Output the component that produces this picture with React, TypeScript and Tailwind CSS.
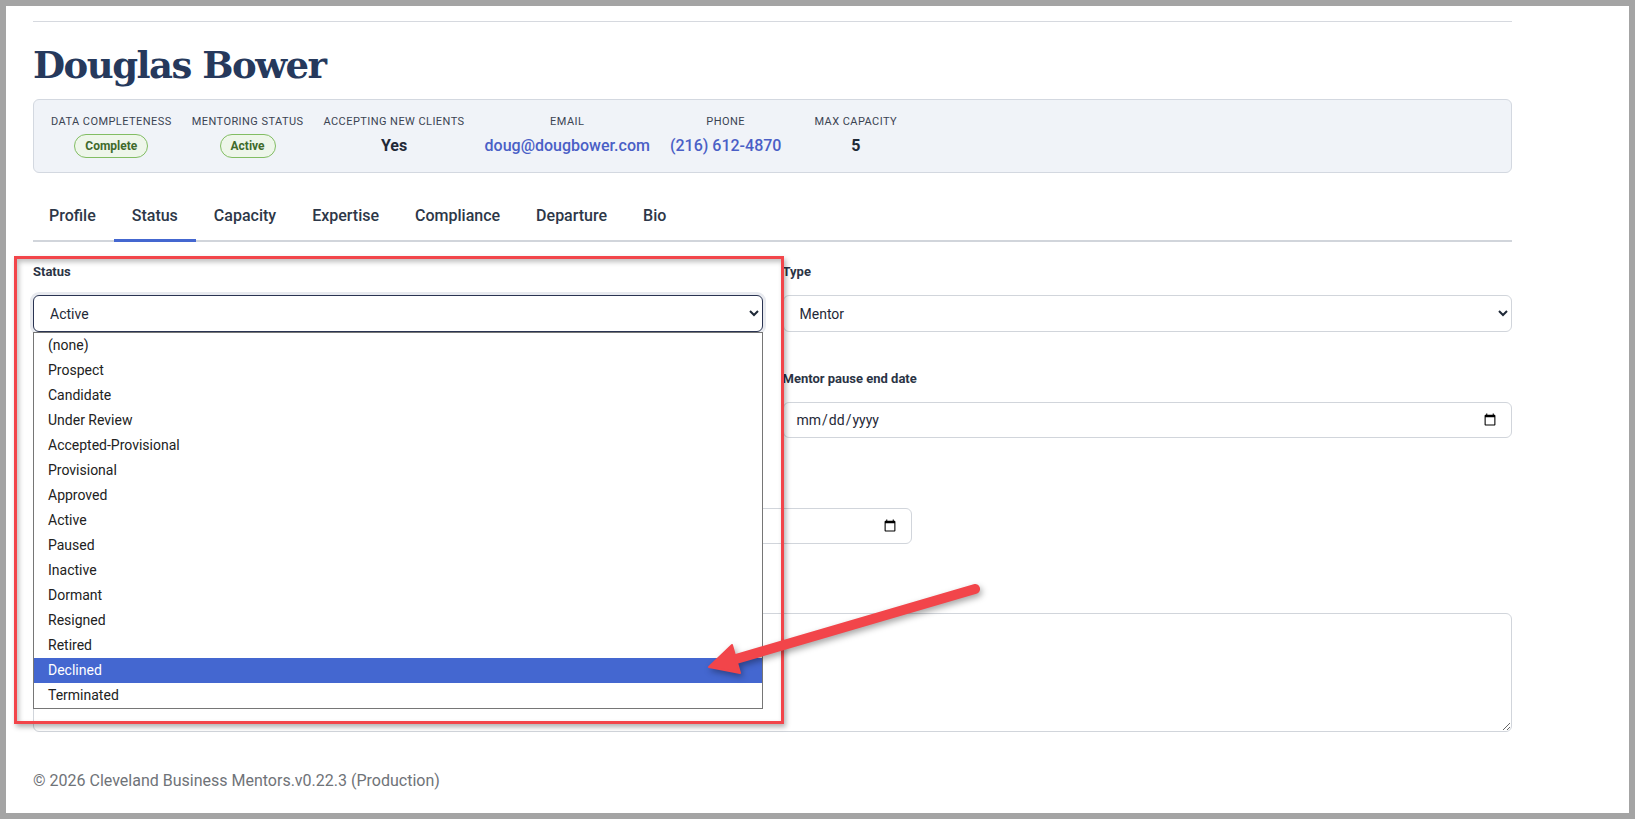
import React from "react";

const statusOptions = [
  "(none)",
  "Prospect",
  "Candidate",
  "Under Review",
  "Accepted-Provisional",
  "Provisional",
  "Approved",
  "Active",
  "Paused",
  "Inactive",
  "Dormant",
  "Resigned",
  "Retired",
  "Declined",
  "Terminated",
];

const tabs = ["Profile", "Status", "Capacity", "Expertise", "Compliance", "Departure", "Bio"];

function Badge({ children }: { children: React.ReactNode }) {
  return (
    <span className="inline-flex h-6 items-center rounded-full border border-[#82bd63] bg-[#eef6ea] px-[10px] text-[12px] font-bold text-[#3f6a2c]">
      {children}
    </span>
  );
}

function Stat({
  label,
  children,
  className = "",
}: {
  label: string;
  children: React.ReactNode;
  className?: string;
}) {
  return (
    <div className={"flex flex-col items-center " + className}>
      <div className="text-[11px] leading-[14px] tracking-[0.04em] text-[#3b4352]">{label}</div>
      <div className="mt-[5px] flex h-6 items-center">{children}</div>
    </div>
  );
}

function Label({ children }: { children: React.ReactNode }) {
  return <div className="mb-[15px] text-[13px] font-bold leading-4 text-[#2b3445]">{children}</div>;
}

export default function App() {
  return (
    <div className="min-h-screen bg-[#a4a4a4] p-[6px]" style={{ fontFamily: "Roboto, 'Liberation Sans', sans-serif" }}>
      <div className="relative h-[807px] bg-white pl-[27px] pt-[15px]">
        <div className="w-[1479px]">
          <div className="border-t border-[#d6d9df]" />

          <h1
            className="mt-[19px] text-[37px] font-bold leading-[48px] tracking-[-1.5px] text-[#26395c]"
            style={{ fontFamily: "'DejaVu Serif', 'Liberation Serif', serif" }}
          >
            Douglas Bower
          </h1>

          {/* summary strip */}
          <div className="mt-[10px] flex gap-5 rounded-md border border-[#d3d8e0] bg-[#f0f3f8] pb-[14px] pl-[17px] pt-[15px]">
            <Stat label="DATA COMPLETENESS">
              <Badge>Complete</Badge>
            </Stat>
            <Stat label="MENTORING STATUS">
              <Badge>Active</Badge>
            </Stat>
            <Stat label="ACCEPTING NEW CLIENTS">
              <span className="text-[16px] font-bold text-[#1f2937]">Yes</span>
            </Stat>
            <Stat label="EMAIL">
              <span className="text-[16px] font-medium text-[#4a5fc6]">doug@dougbower.com</span>
            </Stat>
            <Stat label="PHONE">
              <span className="text-[16px] font-medium text-[#4a5fc6]">(216) 612-4870</span>
            </Stat>
            <Stat label="MAX CAPACITY" className="ml-[13px]">
              <span className="text-[16px] font-bold text-[#1f2937]">5</span>
            </Stat>
          </div>

          {/* tabs */}
          <nav className="mt-[22px] flex border-b-2 border-[#d1d5db]">
            {tabs.map((t, i) => (
              <div
                key={t}
                className={
                  "-mb-[2px] border-b-[3px] px-[18px] pb-[11px] pt-[9px] text-[16px] font-medium leading-6 text-[#2d3748] " +
                  (i === 0 ? "-ml-[2px] " : "") +
                  (t === "Status" ? "border-[#4467d0]" : "border-transparent")
                }
              >
                {t}
              </div>
            ))}
          </nav>

          {/* form */}
          <div className="pt-[22px]">
            <div className="grid grid-cols-2 gap-5">
              <div>
                <Label>Status</Label>
                <div className="relative">
                  <select
                    defaultValue="Active"
                    className="h-[37px] w-full rounded-md border border-[#2a3452] bg-white pl-3 pr-2 text-[14px] text-[#1f2937] shadow-[0_0_0_3px_#e8eaef]"
                  >
                    {statusOptions.map((o) => (
                      <option key={o}>{o}</option>
                    ))}
                  </select>
                  {/* open listbox */}
                  <div className="absolute left-0 right-0 top-full z-10 border border-[#767676] bg-white">
                    {statusOptions.map((o) => (
                      <div
                        key={o}
                        className={
                          "flex h-[25px] items-center pl-[14px] text-[14px] " +
                          (o === "Declined" ? "bg-[#4467d0] text-white" : "text-[#222]")
                        }
                      >
                        {o}
                      </div>
                    ))}
                  </div>
                </div>
              </div>
              <div>
                <Label>Type</Label>
                <select
                  defaultValue="Mentor"
                  className="h-[37px] w-full rounded-md border border-[#d1d5db] bg-white pl-3 pr-2 text-[14px] text-[#1f2937]"
                >
                  <option>Mentor</option>
                  <option>Co-Mentor</option>
                </select>
              </div>
            </div>

            <div className="mt-[39px] grid grid-cols-2 gap-5">
              <div>
                <Label>Mentor pause start date</Label>
                <input type="date" className="h-9 w-full rounded-md border border-[#d1d5db] px-3 text-[14px] text-[#1f2937]" />
              </div>
              <div>
                <Label>Mentor pause end date</Label>
                <input type="date" className="h-9 w-full rounded-md border border-[#d1d5db] px-3 text-[14px] text-[#1f2937]" />
              </div>
            </div>

            <div className="mt-[39px]">
              <Label>Status date</Label>
              <input type="date" className="h-9 w-[879px] rounded-md border border-[#d1d5db] px-3 text-[14px] text-[#1f2937]" />
            </div>

            <div className="mt-[38px]">
              <Label>Status notes</Label>
              <textarea className="block h-[119px] w-full rounded-md border border-[#d1d5db] px-3 py-2 text-[14px]" />
            </div>
          </div>

          <footer className="mt-[37px] text-[16px] leading-6 text-[#6f7378]">
            © 2026 Cleveland Business Mentors.v0.22.3 (Production)
          </footer>
        </div>

        {/* annotation: red highlight box */}
        <div className="pointer-events-none absolute left-[8px] top-[250px] z-20 h-[468px] w-[770px] border-[3px] border-[#f2454a] shadow-[2px_3px_5px_rgba(0,0,0,0.3),inset_2px_3px_5px_rgba(0,0,0,0.25)]" />

        {/* annotation: arrow */}
        <svg
          className="pointer-events-none absolute left-0 top-0 z-20 drop-shadow-[2px_3px_3px_rgba(0,0,0,0.35)]"
          width="1623"
          height="807"
          viewBox="0 0 1623 807"
        >
          <line x1="969" y1="583" x2="730" y2="653" stroke="#f2454a" strokeWidth="10" strokeLinecap="round" />
          <polygon points="703,661 726,639 734,667" fill="#f2454a" stroke="#f2454a" strokeWidth="2" strokeLinejoin="round" />
        </svg>
      </div>
    </div>
  );
}
